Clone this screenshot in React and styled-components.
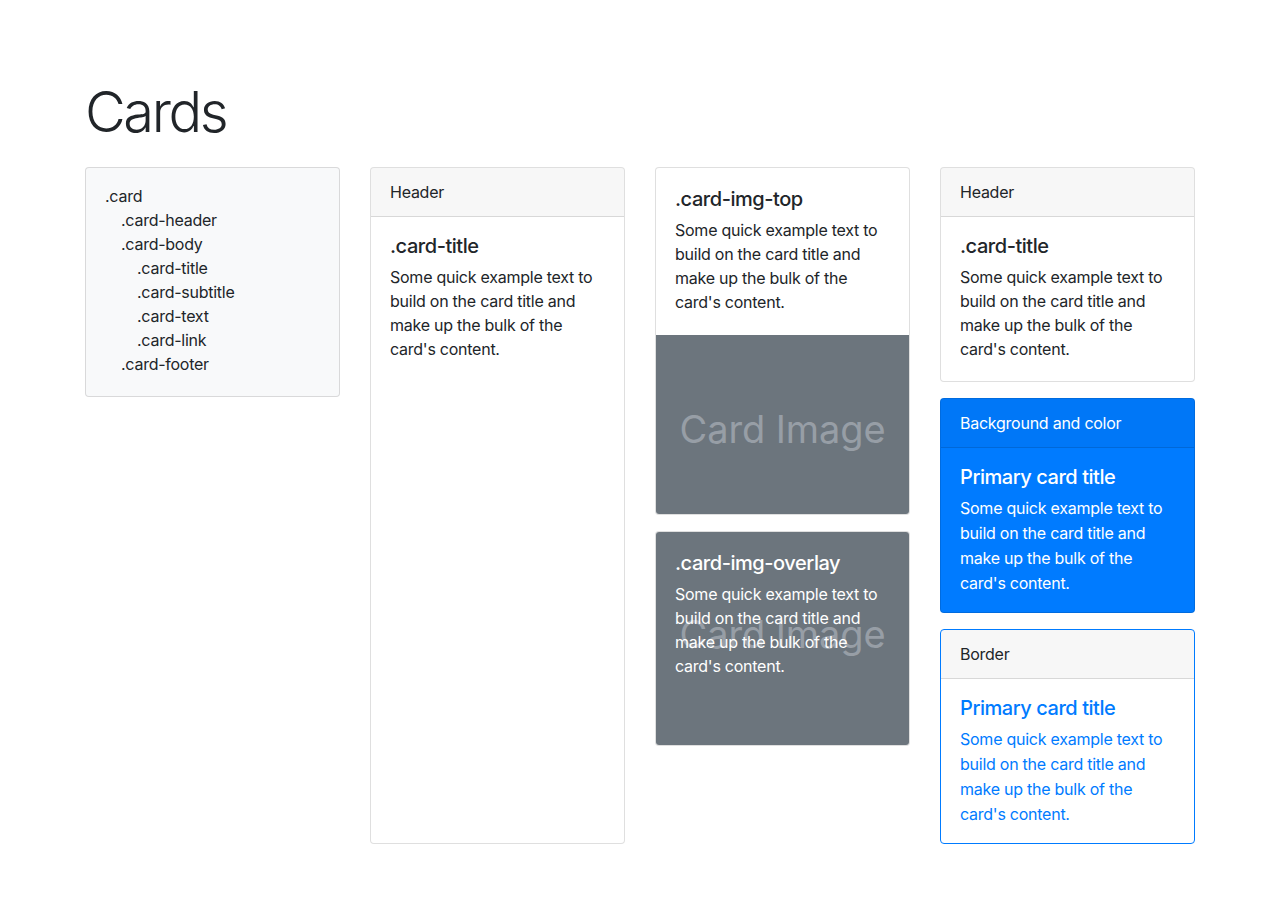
import styled, { createGlobalStyle } from "styled-components";

const GlobalStyle = createGlobalStyle`
  * {
    box-sizing: border-box;
  }
  body {
    margin: 0;
    background: #ffffff;
    color: #212529;
    font-family: Inter, "Noto Sans", "Liberation Sans", sans-serif;
    font-size: 16px;
    line-height: 24px;
    letter-spacing: -0.25px;
  }
`;

const Page = styled.main`
  max-width: 1140px;
  margin: 0 auto;
  padding: 79px 15px 40px;
`;

const Heading = styled.h1`
  margin: 0 0 21px;
  font-size: 56px;
  font-weight: 300;
  line-height: 1.2;
  letter-spacing: -2.4px;
`;

const Row = styled.div`
  display: grid;
  grid-template-columns: repeat(4, 1fr);
  gap: 30px;
`;

const Column = styled.div`
  display: flex;
  flex-direction: column;
  gap: 16px;
`;

const Card = styled.div`
  position: relative;
  display: flex;
  flex-direction: column;
  flex: ${(p) => (p.$fill ? 1 : "none")};
  background: ${(p) => p.$bg || "#ffffff"};
  color: ${(p) => p.$color || "#212529"};
  border: 1px solid ${(p) => p.$border || "rgba(0, 0, 0, 0.125)"};
  border-radius: 4px;
  overflow: hidden;
`;

const CardHeader = styled.div`
  padding: 12px 19px;
  background: rgba(0, 0, 0, 0.03);
  border-bottom: 1px solid rgba(0, 0, 0, 0.125);
  color: ${(p) => p.$color || "inherit"};
`;

const CardBody = styled.div`
  padding: ${(p) => p.$pad || "17px 19px 20px"};
  line-height: ${(p) => p.$lh || "24px"};
`;

const CardTitle = styled.h5`
  margin: 0 0 7px;
  font-size: 20px;
  font-weight: 500;
  line-height: 24px;
  letter-spacing: -0.45px;
`;

const CardText = styled.p`
  margin: 0;
`;

const Tree = styled.div`
  padding: 16px 19px 20px;
`;

const TreeItem = styled.div`
  padding-left: ${(p) => p.$level * 16}px;
`;

const Placeholder = styled.div`
  height: ${(p) => p.$h}px;
  background: #6c757d;
  display: flex;
  align-items: center;
  justify-content: center;
  color: #979ea6;
  font-size: 38px;
  line-height: 38px;
  letter-spacing: -0.1px;

  span {
    transform: translateY(${(p) => p.$shift}px);
  }
`;

const Overlay = styled.div`
  position: absolute;
  inset: 0;
  padding: 19px 19px;
  color: #ffffff;
`;

const text =
  "Some quick example text to build on the card title and make up the bulk of the card's content.";

const tree = [
  [0, ".card"],
  [1, ".card-header"],
  [1, ".card-body"],
  [2, ".card-title"],
  [2, ".card-subtitle"],
  [2, ".card-text"],
  [2, ".card-link"],
  [1, ".card-footer"],
];

const App = () => {
  return (
    <>
      <GlobalStyle />
      <Page>
        <Heading>Cards</Heading>
        <Row>
          <Column>
            <Card $bg="#f8f9fa">
              <Tree>
                {tree.map(([level, name]) => (
                  <TreeItem key={name} $level={level}>
                    {name}
                  </TreeItem>
                ))}
              </Tree>
            </Card>
          </Column>

          <Column>
            <Card $fill>
              <CardHeader>Header</CardHeader>
              <CardBody>
                <CardTitle>.card-title</CardTitle>
                <CardText>{text}</CardText>
              </CardBody>
            </Card>
          </Column>

          <Column>
            <Card>
              <CardBody $pad="19px 19px 21px">
                <CardTitle>.card-img-top</CardTitle>
                <CardText>{text}</CardText>
              </CardBody>
              <Placeholder $h={179} $shift={4}>
                <span>Card Image</span>
              </Placeholder>
            </Card>
            <Card>
              <Placeholder $h={213} $shift={-5}>
                <span>Card Image</span>
              </Placeholder>
              <Overlay>
                <CardTitle>.card-img-overlay</CardTitle>
                <CardText>{text}</CardText>
              </Overlay>
            </Card>
          </Column>

          <Column>
            <Card>
              <CardHeader>Header</CardHeader>
              <CardBody>
                <CardTitle>.card-title</CardTitle>
                <CardText>{text}</CardText>
              </CardBody>
            </Card>
            <Card $bg="#007bff" $color="#ffffff">
              <CardHeader>Background and color</CardHeader>
              <CardBody $pad="17px 19px 16px" $lh="25px">
                <CardTitle>Primary card title</CardTitle>
                <CardText>{text}</CardText>
              </CardBody>
            </Card>
            <Card $border="#007bff" $color="#007bff">
              <CardHeader $color="#212529">Border</CardHeader>
              <CardBody $pad="17px 19px 16px" $lh="25px">
                <CardTitle>Primary card title</CardTitle>
                <CardText>{text}</CardText>
              </CardBody>
            </Card>
          </Column>
        </Row>
      </Page>
    </>
  );
};

export default App;
